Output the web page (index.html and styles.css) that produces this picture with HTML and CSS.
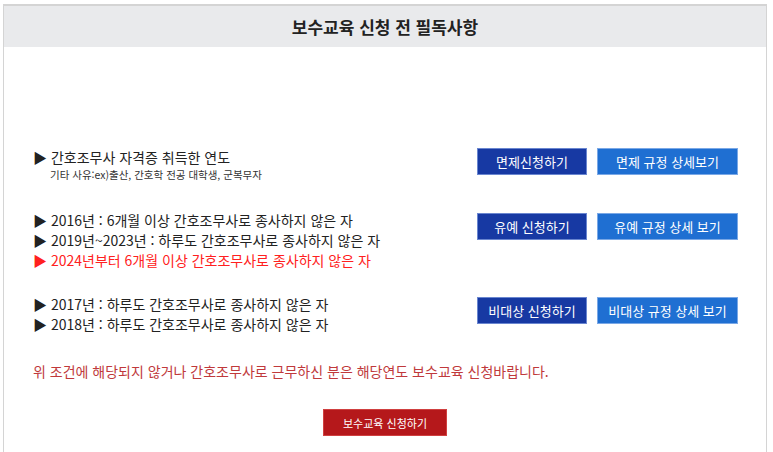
FILE: index.html
```html
<!DOCTYPE html>
<html lang="ko">
<head>
<meta charset="utf-8">
<link rel="stylesheet" href="styles.css">
</head>
<body>
<div class="box">
  <div class="head">보수교육 신청 전 필독사항</div>
  <div class="body">
    <div class="row row1">
      <div class="txt">
        <div class="line">▶ 간호조무사 자격증 취득한 연도</div>
        <div class="sub">기타 사유:ex)출산, 간호학 전공 대학생, 군복무자</div>
      </div>
      <div class="btns">
        <a class="btn dark w1">면제신청하기</a>
        <a class="btn light w2">면제 규정 상세보기</a>
      </div>
    </div>
    <div class="row row2">
      <div class="txt">
        <div class="line">▶ 2016년 : 6개월 이상 간호조무사로 종사하지 않은 자</div>
        <div class="line">▶ 2019년~2023년 : 하루도 간호조무사로 종사하지 않은 자</div>
        <div class="line red">▶ 2024년부터 6개월 이상 간호조무사로 종사하지 않은 자</div>
      </div>
      <div class="btns">
        <a class="btn dark w1">유예 신청하기</a>
        <a class="btn light w2">유예 규정 상세 보기</a>
      </div>
    </div>
    <div class="row row3">
      <div class="txt">
        <div class="line">▶ 2017년 : 하루도 간호조무사로 종사하지 않은 자</div>
        <div class="line">▶ 2018년 : 하루도 간호조무사로 종사하지 않은 자</div>
      </div>
      <div class="btns">
        <a class="btn dark w1">비대상 신청하기</a>
        <a class="btn light w2">비대상 규정 상세 보기</a>
      </div>
    </div>
    <p class="note">위 조건에 해당되지 않거나 간호조무사로 근무하신 분은 해당연도 보수교육 신청바랍니다.</p>
    <div class="final"><a class="btn redbtn">보수교육 신청하기</a></div>
  </div>
</div>
</body>
</html>
```

FILE: styles.css
```css
html, body { margin: 0; padding: 0; background: #fff; }
body {
  font-family: "Malgun Gothic", "Noto Sans CJK KR", "Noto Sans", sans-serif;
  color: #222;
  padding: 4px 0 0 3px;
}
.box {
  width: 762px;
  border-top: 2px solid #d4d4d4;
  border-left: 1px solid #d4d4d4;
  border-right: 1px solid #d4d4d4;
  height: 460px;
}
.head {
  background: #e9eaec;
  height: 41px;
  line-height: 41px;
  text-align: center;
  font-size: 17px;
  font-weight: bold;
  color: #222;
}
.body {
  padding: 100px 28px 0 29px;
}
.row {
  display: flex;
  justify-content: space-between;
  align-items: flex-start;
}
.row1 { height: 63px; }
.row2 { height: 84px; }
.row3 { height: 67px; }
.txt { font-size: 14px; }
.line { line-height: 20px; height: 20px; white-space: nowrap; }
.sub { font-size: 10.5px; padding-left: 17px; line-height: 16px; color: #333; }
.red { color: #ff2020; }
.btns { display: flex; gap: 10px; padding-top: 1px; }
.row2 .btns, .row3 .btns { padding-top: 3px; }
.btn {
  display: flex;
  align-items: center;
  justify-content: center;
  height: 27px;
  box-sizing: border-box;
  color: #fff;
  font-size: 13px;
  white-space: nowrap;
}
.dark { background: #1739a3; border: 1px solid #6a86d0; }
.light { background: #1f6fd2; border: 1px solid #7aa8e6; }
.w1 { width: 110px; }
.w2 { width: 141px; }
.note {
  margin: 0;
  font-size: 14px;
  color: #c0393b;
  line-height: 20px;
}
.final {
  display: flex;
  justify-content: center;
  padding-top: 28px;
  padding-right: 1px;
}
.redbtn {
  width: 124px;
  background: #b5181b;
  border: 1px solid #d04040;
  font-size: 11px;
}
```
